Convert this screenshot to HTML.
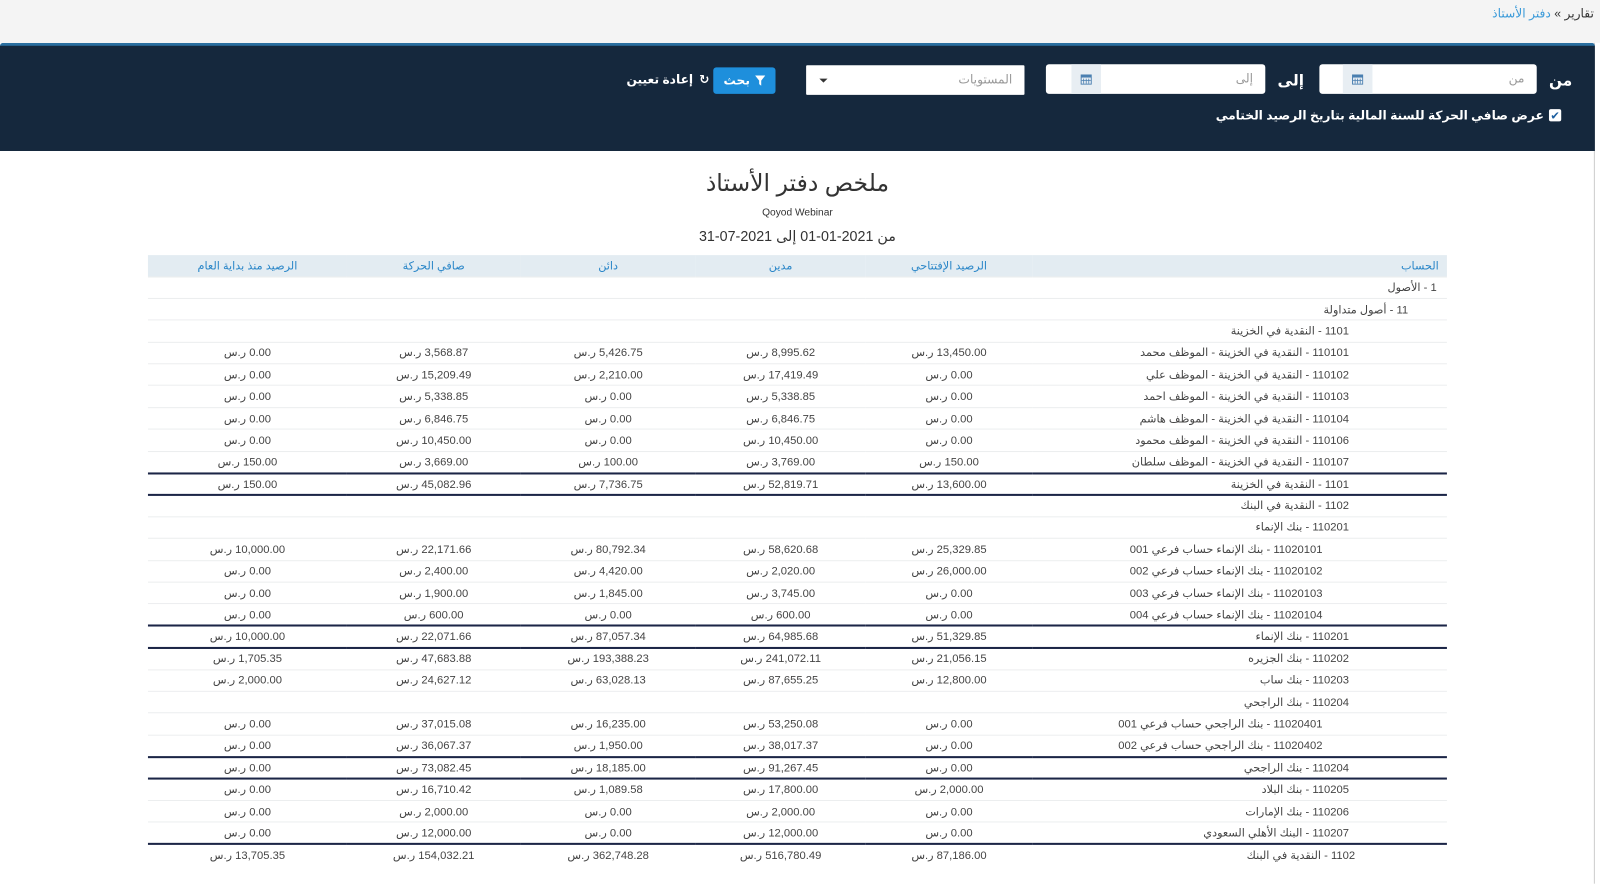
<!DOCTYPE html>
<html><head><meta charset="utf-8"><style>
*{box-sizing:border-box;margin:0;padding:0}
html,body{width:1600px;height:866px;overflow:hidden;background:#fff}
body{font-family:"Liberation Sans","DejaVu Sans",sans-serif}
#w{position:absolute;left:0;top:0;width:1568px;height:849px;transform:scale(1.0204);transform-origin:0 0}
.top{position:absolute;left:0;top:0;width:1568px;height:42px;background:#f4f4f4}
.bc{position:absolute;right:6px;top:6px;font-size:12px;color:#333;direction:rtl}
.bc span{color:#3a9ad9}
.vline{position:absolute;left:1562px;top:42px;width:1px;height:824px;background:#ccc}
.hdr{position:absolute;left:0;top:42px;width:1563px;height:106px;background:#15283d;border-top:3px solid #2a6fa0;border-radius:3px 3px 0 0}
.inp{position:absolute;height:29px;background:#fff;border-radius:3px;font-size:12px;color:#999;direction:rtl;padding:7px 12px}
.cal{position:absolute;top:0;width:29px;height:29px;background:#e8eef3;display:flex;align-items:center;justify-content:center}
.lbl{position:absolute;color:#fff;font-size:15px;font-weight:bold}
.btn{position:absolute;left:699px;top:21px;width:61px;height:26px;background:#1e8fdc;border-radius:3px;color:#fff;font-size:12px;font-weight:bold;display:flex;align-items:center;justify-content:center;gap:5px}
.title{position:absolute;left:0;width:1563px;text-align:center;color:#333}
table{position:absolute;left:145px;top:250px;width:1273px;border-collapse:collapse;direction:rtl;font-size:11px;color:#444}
th{height:21px;background:#e3ecf2;color:#2a86c8;font-weight:normal;font-size:11px}
td{height:21.4px;border-top:1px solid #eceeef;text-align:center;white-space:nowrap;padding:0}
td.a{text-align:right}
tr.t td{border-top:2px solid #1b2546}
tr.tb td{border-bottom:2px solid #1b2546}
</style></head><body><div id="w">
<div class="top"><div class="bc">تقارير » <span>دفتر الأستاذ</span></div></div>
<div class="vline"></div>
<div class="hdr">
 <div class="lbl" style="left:1518px;top:25px">من</div>
 <div class="inp" style="left:1293px;top:18px;width:213px">من<div class="cal" style="left:23px"><svg width="11" height="11" viewBox="0 0 11 11"><rect x="0.5" y="1.5" width="10" height="9" fill="none" stroke="#4a7fb0"/><rect x="0.5" y="1.5" width="10" height="2.5" fill="#4a7fb0"/><path d="M3 5v5M5.5 5v5M8 5v5M1 7h9" stroke="#4a7fb0" stroke-width=".8"/></svg></div></div>
 <div class="lbl" style="left:1252px;top:25px">إلى</div>
 <div class="inp" style="left:1025px;top:18px;width:215px">إلى<div class="cal" style="left:25px"><svg width="11" height="11" viewBox="0 0 11 11"><rect x="0.5" y="1.5" width="10" height="9" fill="none" stroke="#4a7fb0"/><rect x="0.5" y="1.5" width="10" height="2.5" fill="#4a7fb0"/><path d="M3 5v5M5.5 5v5M8 5v5M1 7h9" stroke="#4a7fb0" stroke-width=".8"/></svg></div></div>
 <div class="inp" style="left:790px;top:19px;width:214px;border-radius:1px">المستويات<span style="position:absolute;left:13px;top:13px;width:0;height:0;border-left:4px solid transparent;border-right:4px solid transparent;border-top:4px solid #333"></span></div>
 <div class="btn"><span style="order:1">بحث</span><svg style="order:2" width="10" height="10" viewBox="0 0 10 10"><path d="M0 0h10L6 5v5L4 8.5V5z" fill="#fff"/></svg></div>
 <div style="position:absolute;left:614px;top:26px;color:#fff;font-size:12px;font-weight:bold;display:flex;gap:6px;align-items:center"><span>إعادة تعيين</span><span>↻</span></div>
 <div style="position:absolute;right:33px;top:61px;color:#fff;font-size:12px;font-weight:bold;direction:rtl;display:flex;align-items:center;gap:5px"><span style="width:12px;height:12px;background:#fff;border-radius:2px;display:inline-flex;align-items:center;justify-content:center;color:#1d5fa0;font-size:11px">✔</span>عرض صافي الحركة للسنة المالية بتاريخ الرصيد الختامي</div>
</div>
<div class="title" style="top:166px;font-size:23px">ملخص دفتر الأستاذ</div>
<div class="title" style="top:203px;font-size:10px">Qoyod Webinar</div>
<div class="title" style="top:223px;font-size:14px;direction:rtl">من 2021-01-01 إلى 2021-07-31</div>
<table>
<colgroup><col style="width:406px"><col style="width:164px"><col style="width:166px"><col style="width:172px"><col style="width:170px"><col style="width:195px"></colgroup>
<tr><th class="a" style="text-align:right;padding-right:8px">الحساب</th><th>الرصيد الإفتتاحي</th><th>مدين</th><th>دائن</th><th>صافي الحركة</th><th>الرصيد منذ بداية العام</th></tr>
<tr><td class="a" style="padding-right:10px">1 - الأصول</td><td></td><td></td><td></td><td></td><td></td></tr>
<tr><td class="a" style="padding-right:38px">11 - أصول متداولة</td><td></td><td></td><td></td><td></td><td></td></tr>
<tr><td class="a" style="padding-right:96px">1101 - النقدية في الخزينة</td><td></td><td></td><td></td><td></td><td></td></tr>
<tr><td class="a" style="padding-right:96px">110101 - النقدية في الخزينة - الموظف محمد</td><td>13,450.00 ر.س</td><td>8,995.62 ر.س</td><td>5,426.75 ر.س</td><td>3,568.87 ر.س</td><td>0.00 ر.س</td></tr>
<tr><td class="a" style="padding-right:96px">110102 - النقدية في الخزينة - الموظف علي</td><td>0.00 ر.س</td><td>17,419.49 ر.س</td><td>2,210.00 ر.س</td><td>15,209.49 ر.س</td><td>0.00 ر.س</td></tr>
<tr><td class="a" style="padding-right:96px">110103 - النقدية في الخزينة - الموظف احمد</td><td>0.00 ر.س</td><td>5,338.85 ر.س</td><td>0.00 ر.س</td><td>5,338.85 ر.س</td><td>0.00 ر.س</td></tr>
<tr><td class="a" style="padding-right:96px">110104 - النقدية في الخزينة - الموظف هاشم</td><td>0.00 ر.س</td><td>6,846.75 ر.س</td><td>0.00 ر.س</td><td>6,846.75 ر.س</td><td>0.00 ر.س</td></tr>
<tr><td class="a" style="padding-right:96px">110106 - النقدية في الخزينة - الموظف محمود</td><td>0.00 ر.س</td><td>10,450.00 ر.س</td><td>0.00 ر.س</td><td>10,450.00 ر.س</td><td>0.00 ر.س</td></tr>
<tr><td class="a" style="padding-right:96px">110107 - النقدية في الخزينة - الموظف سلطان</td><td>150.00 ر.س</td><td>3,769.00 ر.س</td><td>100.00 ر.س</td><td>3,669.00 ر.س</td><td>150.00 ر.س</td></tr>
<tr class="t tb"><td class="a" style="padding-right:96px">1101 - النقدية في الخزينة</td><td>13,600.00 ر.س</td><td>52,819.71 ر.س</td><td>7,736.75 ر.س</td><td>45,082.96 ر.س</td><td>150.00 ر.س</td></tr>
<tr><td class="a" style="padding-right:96px">1102 - النقدية في البنك</td><td></td><td></td><td></td><td></td><td></td></tr>
<tr><td class="a" style="padding-right:96px">110201 - بنك الإنماء</td><td></td><td></td><td></td><td></td><td></td></tr>
<tr><td class="a" style="padding-right:122px">11020101 - بنك الإنماء حساب فرعي 001</td><td>25,329.85 ر.س</td><td>58,620.68 ر.س</td><td>80,792.34 ر.س</td><td>22,171.66 ر.س</td><td>10,000.00 ر.س</td></tr>
<tr><td class="a" style="padding-right:122px">11020102 - بنك الإنماء حساب فرعي 002</td><td>26,000.00 ر.س</td><td>2,020.00 ر.س</td><td>4,420.00 ر.س</td><td>2,400.00 ر.س</td><td>0.00 ر.س</td></tr>
<tr><td class="a" style="padding-right:122px">11020103 - بنك الإنماء حساب فرعي 003</td><td>0.00 ر.س</td><td>3,745.00 ر.س</td><td>1,845.00 ر.س</td><td>1,900.00 ر.س</td><td>0.00 ر.س</td></tr>
<tr><td class="a" style="padding-right:122px">11020104 - بنك الإنماء حساب فرعي 004</td><td>0.00 ر.س</td><td>600.00 ر.س</td><td>0.00 ر.س</td><td>600.00 ر.س</td><td>0.00 ر.س</td></tr>
<tr class="t tb"><td class="a" style="padding-right:96px">110201 - بنك الإنماء</td><td>51,329.85 ر.س</td><td>64,985.68 ر.س</td><td>87,057.34 ر.س</td><td>22,071.66 ر.س</td><td>10,000.00 ر.س</td></tr>
<tr><td class="a" style="padding-right:96px">110202 - بنك الجزيره</td><td>21,056.15 ر.س</td><td>241,072.11 ر.س</td><td>193,388.23 ر.س</td><td>47,683.88 ر.س</td><td>1,705.35 ر.س</td></tr>
<tr><td class="a" style="padding-right:96px">110203 - بنك ساب</td><td>12,800.00 ر.س</td><td>87,655.25 ر.س</td><td>63,028.13 ر.س</td><td>24,627.12 ر.س</td><td>2,000.00 ر.س</td></tr>
<tr><td class="a" style="padding-right:96px">110204 - بنك الراجحي</td><td></td><td></td><td></td><td></td><td></td></tr>
<tr><td class="a" style="padding-right:122px">11020401 - بنك الراجحي حساب فرعي 001</td><td>0.00 ر.س</td><td>53,250.08 ر.س</td><td>16,235.00 ر.س</td><td>37,015.08 ر.س</td><td>0.00 ر.س</td></tr>
<tr><td class="a" style="padding-right:122px">11020402 - بنك الراجحي حساب فرعي 002</td><td>0.00 ر.س</td><td>38,017.37 ر.س</td><td>1,950.00 ر.س</td><td>36,067.37 ر.س</td><td>0.00 ر.س</td></tr>
<tr class="t tb"><td class="a" style="padding-right:96px">110204 - بنك الراجحي</td><td>0.00 ر.س</td><td>91,267.45 ر.س</td><td>18,185.00 ر.س</td><td>73,082.45 ر.س</td><td>0.00 ر.س</td></tr>
<tr><td class="a" style="padding-right:96px">110205 - بنك البلاد</td><td>2,000.00 ر.س</td><td>17,800.00 ر.س</td><td>1,089.58 ر.س</td><td>16,710.42 ر.س</td><td>0.00 ر.س</td></tr>
<tr><td class="a" style="padding-right:96px">110206 - بنك الإمارات</td><td>0.00 ر.س</td><td>2,000.00 ر.س</td><td>0.00 ر.س</td><td>2,000.00 ر.س</td><td>0.00 ر.س</td></tr>
<tr class="tb"><td class="a" style="padding-right:96px">110207 - البنك الأهلي السعودي</td><td>0.00 ر.س</td><td>12,000.00 ر.س</td><td>0.00 ر.س</td><td>12,000.00 ر.س</td><td>0.00 ر.س</td></tr>
<tr><td class="a" style="padding-right:90px">1102 - النقدية في البنك</td><td>87,186.00 ر.س</td><td>516,780.49 ر.س</td><td>362,748.28 ر.س</td><td>154,032.21 ر.س</td><td>13,705.35 ر.س</td></tr>
</table>
</div></body></html>
